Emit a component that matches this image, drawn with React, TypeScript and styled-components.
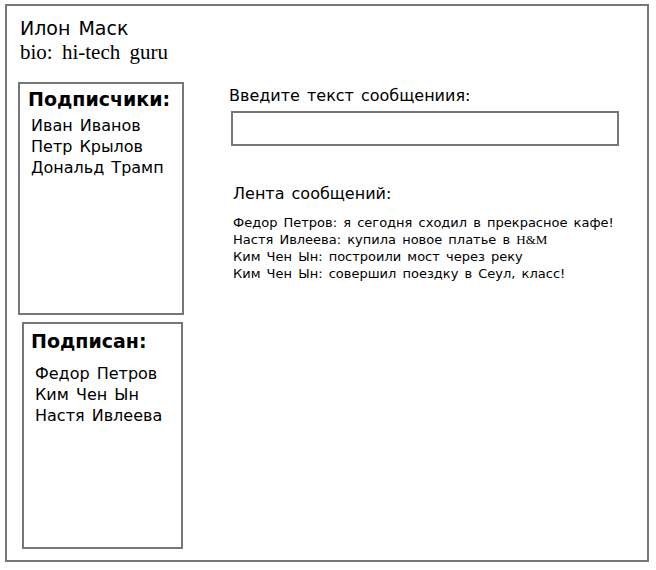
import * as React from "react";
import styled, { createGlobalStyle } from "styled-components";

const GlobalStyle = createGlobalStyle`
  body {
    margin: 0;
    font-family: "DejaVu Sans", sans-serif;
    color: #000;
    background: #fff;
  }
`;

const Frame = styled.div`
  box-sizing: border-box;
  margin: 4px 0 0 5px;
  width: 644px;
  height: 558px;
  border: 2px solid #777;
`;

const Header = styled.div`
  padding: 10px 0 0 13px;
  height: 65px;
  box-sizing: border-box;
`;

const Name = styled.div`
  font-size: 19px;
  line-height: 24px;
  word-spacing: 2px;
`;

const Bio = styled.div`
  font-family: "Liberation Serif", serif;
  font-size: 21px;
  line-height: 24px;
  word-spacing: 4px;
`;

const Latin = styled.span`
  font-family: "Liberation Serif", serif;
`;

const Body = styled.div`
  display: flex;
  margin-top: 11px;
`;

const Side = styled.div`
  display: flex;
  flex-direction: column;
  gap: 7px;
`;

const Box = styled.div<{ $left: number; $w: number; $h: number }>`
  box-sizing: border-box;
  margin-left: ${(p) => p.$left}px;
  width: ${(p) => p.$w}px;
  height: ${(p) => p.$h}px;
  border: 2px solid #777;
`;

const BoxTitle = styled.div<{ $pad: string; $gap: number }>`
  font-weight: bold;
  font-size: 19px;
  line-height: 24px;
  padding: ${(p) => p.$pad};
  margin-bottom: ${(p) => p.$gap}px;
`;

const Person = styled.div`
  font-size: 16px;
  line-height: 21px;
  padding-left: 11px;
  word-spacing: 2px;
`;

const Main = styled.div`
  display: flex;
  flex-direction: column;
  margin-left: 45px;
  padding-top: 4px;
`;

const Label = styled.div`
  font-size: 16px;
  line-height: 20px;
  word-spacing: 2px;
`;

const Input = styled.div`
  box-sizing: border-box;
  width: 388px;
  height: 35px;
  margin: 5px 0 0 2px;
  border: 2px solid #777;
`;

const FeedTitle = styled.div`
  font-size: 16px;
  line-height: 20px;
  margin: 38px 0 0 4px;
  word-spacing: 2px;
`;

const Feed = styled.div`
  margin: 10px 0 0 4px;
`;

const Post = styled.div`
  font-size: 13px;
  line-height: 17px;
  word-spacing: 2px;
`;

const followers = ["Иван Иванов", "Петр Крылов", "Дональд Трамп"];
const following = ["Федор Петров", "Ким Чен Ын", "Настя Ивлеева"];

export default function App() {
  return (
    <>
      <GlobalStyle />
      <Frame>
        <Header>
          <Name>Илон Маск</Name>
          <Bio>bio: hi-tech guru</Bio>
        </Header>
        <Body>
          <Side>
            <Box $left={11} $w={166} $h={233}>
              <BoxTitle $pad="3px 0 0 8px" $gap={4}>
                Подписчики:
              </BoxTitle>
              {followers.map((f) => (
                <Person key={f}>{f}</Person>
              ))}
            </Box>
            <Box $left={15} $w={161} $h={227}>
              <BoxTitle $pad="5px 0 0 7px" $gap={10}>
                Подписан:
              </BoxTitle>
              {following.map((f) => (
                <Person key={f}>{f}</Person>
              ))}
            </Box>
          </Side>
          <Main>
            <Label>Введите текст сообщениия:</Label>
            <Input />
            <FeedTitle>Лента сообщений:</FeedTitle>
            <Feed>
              <Post>Федор Петров: я сегодня сходил в прекрасное кафе!</Post>
              <Post>
                Настя Ивлеева: купила новое платье в <Latin>H&amp;M</Latin>
              </Post>
              <Post>Ким Чен Ын: построили мост через реку</Post>
              <Post>Ким Чен Ын: совершил поездку в Сеул, класс!</Post>
            </Feed>
          </Main>
        </Body>
      </Frame>
    </>
  );
}
